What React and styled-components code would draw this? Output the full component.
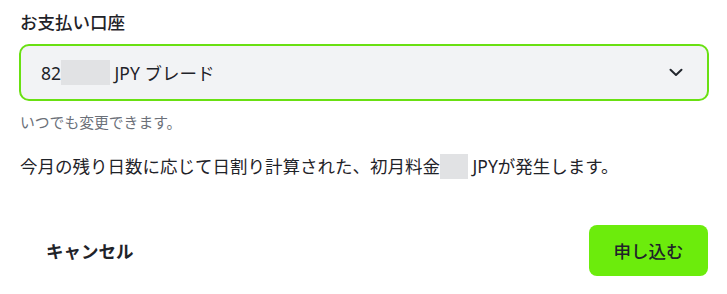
import React from 'react';
import styled, { createGlobalStyle } from 'styled-components';

const GlobalStyle = createGlobalStyle`
  html, body {
    margin: 0;
    padding: 0;
    background: #ffffff;
  }
  body {
    font-family: "Noto Sans", "Noto Sans CJK JP", sans-serif;
    color: #1f2329;
  }
`;

const Wrapper = styled.div`
  width: 727px;
  box-sizing: border-box;
  padding: 10px 18px 0 19px;
  display: flex;
  flex-direction: column;
`;

const FieldLabel = styled.label`
  font-size: 17.5px;
  font-weight: 500;
  line-height: 24px;
  margin-left: 1px;
  margin-bottom: 10px;
`;

const SelectBox = styled.div`
  height: 57px;
  box-sizing: border-box;
  border: 2px solid #69e012;
  border-radius: 10px;
  background: #f2f3f5;
  display: flex;
  align-items: center;
  justify-content: space-between;
  padding: 0 24px 0 20px;
  font-size: 17.5px;
`;

const SelectValue = styled.span`
  display: flex;
  align-items: center;
  white-space: pre;
`;

const Masked = styled.span`
  display: inline-block;
  width: ${(p) => p.$w}px;
  height: 25px;
  background: #e1e2e4;
  vertical-align: middle;
`;

const Hint = styled.p`
  margin: 11px 0 0 1px;
  font-size: 14.8px;
  line-height: 20px;
  color: #6b7079;
`;

const Notice = styled.p`
  margin: 21px 0 0 1px;
  font-size: 17.5px;
  line-height: 26px;
  display: flex;
  align-items: center;
  white-space: pre;
`;

const Actions = styled.div`
  margin-top: 46px;
  display: flex;
  justify-content: space-between;
  align-items: center;
`;

const CancelButton = styled.button`
  border: none;
  background: transparent;
  font-family: inherit;
  font-size: 17.5px;
  font-weight: 700;
  color: #1f2329;
  padding: 0 27px;
  height: 51px;
`;

const SubmitButton = styled.button`
  border: none;
  width: 119px;
  height: 51px;
  margin-right: 1px;
  border-radius: 8px;
  background: #6cec0c;
  font-family: inherit;
  font-size: 17.5px;
  font-weight: 500;
  color: #1f2329;
`;

function Chevron() {
  return (
    <svg width="14" height="9" viewBox="0 0 14 9" fill="none">
      <path d="M1.5 1.8 L7 7 L12.5 1.8" stroke="#23272e" strokeWidth="2" strokeLinecap="round" strokeLinejoin="round" />
    </svg>
  );
}

export default function App() {
  return (
    <Wrapper>
      <GlobalStyle />
      <FieldLabel>お支払い口座</FieldLabel>
      <SelectBox>
        <SelectValue>
          82<Masked $w={49} /> JPY ブレード
        </SelectValue>
        <Chevron />
      </SelectBox>
      <Hint>いつでも変更できます。</Hint>
      <Notice>
        今月の残り日数に応じて日割り計算された、初月料金<Masked $w={28} /> JPYが発生します。
      </Notice>
      <Actions>
        <CancelButton type="button">キャンセル</CancelButton>
        <SubmitButton type="submit">申し込む</SubmitButton>
      </Actions>
    </Wrapper>
  );
}
